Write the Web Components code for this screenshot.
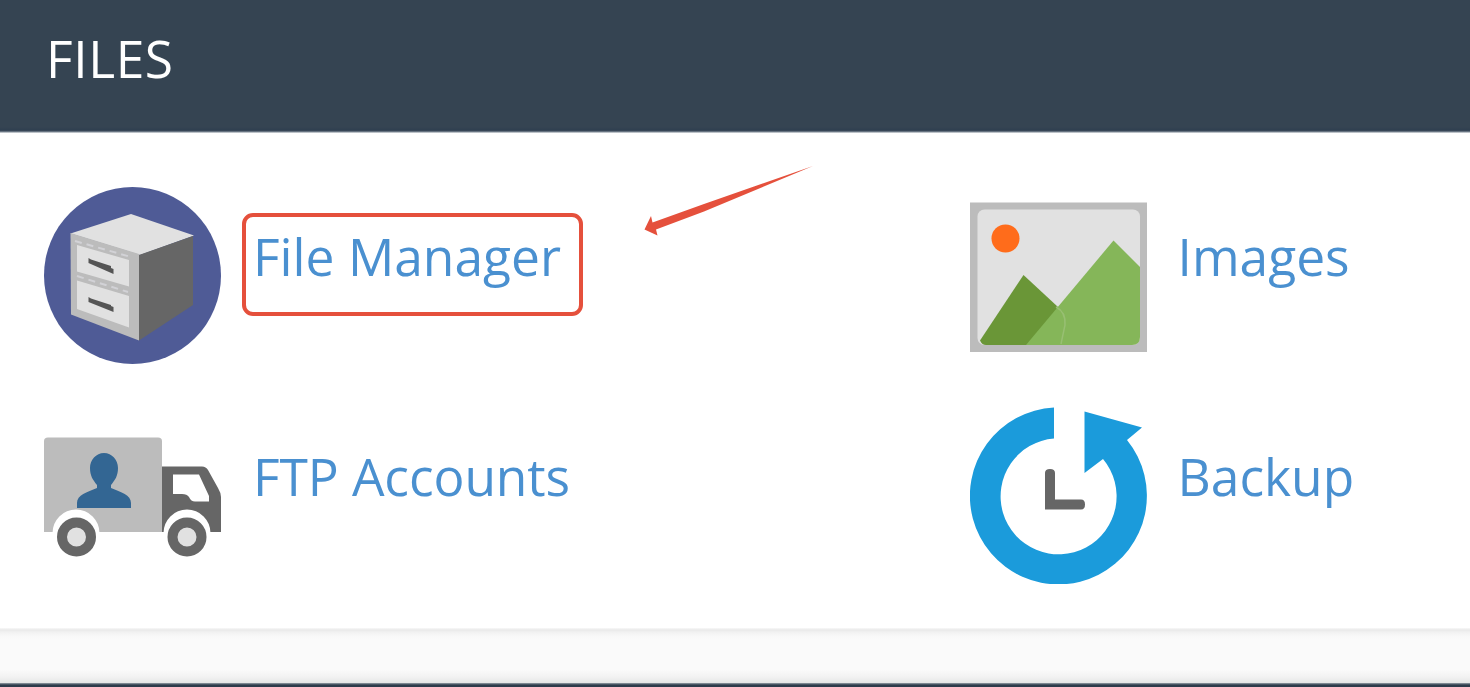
<!DOCTYPE html>
<html lang="en">
<head>
<meta charset="utf-8">
<title>Files</title>
<style>
  body {
    margin: 0;
    height: 687px;
    overflow: hidden;
    background: #fff;
    font-family: "Open Sans", "Noto Sans", sans-serif;
  }
</style>
</head>
<body>
<file-panel heading="FILES">
  <panel-item label="File Manager" icon="cabinet" marked style="--gap: 32px"></panel-item>
  <panel-item label="Images" icon="picture"></panel-item>
  <panel-item label="FTP Accounts" icon="truck" style="--gap: 32px; --tracking: -0.1px"></panel-item>
  <panel-item label="Backup" icon="backup"></panel-item>
</file-panel>

<script>
const icons = {
  cabinet: `
    <circle cx="88.500" cy="88.500" r="88.500" fill="#4f5b96"/>
    <path d="M26.500 46.500 87 27 150 48.500 96 68Z" fill="#e1e1e1"/>
    <path d="M26.500 46 95 67V153.500L27 127.500Z" fill="#bcbcbc"/>
    <path d="M33 58 85 73V99.500L33 84.500ZM33 93.500 85 109V140.500L33 122Z" fill="#e1e1e1"/>
    <path d="M31 54 87 70M33 89 84 105" stroke="#d2d2d6" stroke-width="2" stroke-dasharray="7 5"/>
    <path d="M95 68 149 49V118L95 153.500Z" fill="#666"/>
    <path d="M44.500 71V76L69.500 87V82L67 81V79L47 72.500ZM44.500 110V115L69.500 125V120L67 119V118L47 111.500Z" fill="#555"/>`,
  picture: `
    <path d="M0 15.500H177V165H0Z" fill="#bcbcbc"/>
    <rect x="7.500" y="22.500" width="162.500" height="135.500" rx="7" fill="#e1e1e1"/>
    <circle cx="35.500" cy="51.500" r="14" fill="#ff6c1b"/>
    <path d="M10 153.500 53.500 88 88 120 82 158H16Q12 158 10 153.500Z" fill="#6a9637"/>
    <path d="M56 158 143.500 53.500 170 80V150Q170 158 162 158Z" fill="#85b659"/>
    <path d="M86 120Q96 125 95 138L91 157" fill="none" stroke="#98bf73" stroke-width="1.500"/>`,
  truck: `
    <path d="M0 34Q0 30.500 4 30.500H114Q118 30.500 118 34V125H0Z" fill="#bcbcbc"/>
    <path d="M118 59.500H158Q162 59.500 164 63L174 81Q177 86 177 90V125H118Z" fill="#666"/>
    <path d="M129 67.500H155L165 89V94.500H151Q147 94.500 145 90Q143 87 138 87H129Z" fill="#fff"/>
    <path d="M60 46C68 46 74 53 74 61C74 69 71 73 67 78V81C77 85 87 88 87 96V101H33V96C33 88 43 85 53 81V78C49 73 46 69 46 61C46 53 52 46 60 46Z" fill="#336693"/>
    <path d="M8.500 126A23.500 23.500 0 0 1 55.500 126V131H8.500ZM119.500 126A23.500 23.500 0 0 1 166.500 126V131H119.500Z" fill="#fff"/>
    <g fill="#e1e1e1" stroke="#666" stroke-width="10">
      <circle cx="32.500" cy="130" r="14.500"/>
      <circle cx="143" cy="130" r="14.500"/>
    </g>`,
  backup: `
    <path d="M84 .5A88.500 88.500 0 1 0 157 33L172 20.500 114.500 4.500V66L133 52A58 58 0 1 1 84 31.500Z" fill="#1b9bdb"/>
    <path d="M75 66Q75 62 80 62Q85 62 85 66V92.500H111Q115 92.500 115 97.500Q115 102.500 111 102.500H75Z" fill="#666"/>`
};

class FilePanel extends HTMLElement {
  constructor() {
    super();
    this.shadowDOM = this.attachShadow({ mode: 'open' });
  }

  connectedCallback() {
    this.shadowDOM.innerHTML = `
      <style>
        * {
          margin: 0;
          padding: 0;
          box-sizing: border-box;
        }
        :host {
          display: flex;
          flex-direction: column;
          height: 687px;
        }
        header {
          height: 133px;
          padding: 23px 0 0 46px;
          background: linear-gradient(#354452 0 127px, #2f3f50 130px, #3f4e5e 131px, #8e98a2 132px, #e9ebed 133px);
        }
        h2 {
          font-size: 51.500px;
          font-weight: 400;
          line-height: 70px;
          letter-spacing: 0.6px;
          color: #fff;
        }
        .items {
          display: grid;
          grid-template-columns: 926px 1fr;
          grid-auto-rows: 220px;
          height: 495px;
          padding: 54px 0 0 44px;
        }
        .gap {
          height: 55px;
          background: linear-gradient(#f8f8f8, #e9e9e9 2px, #f1f1f1 4px, #f8f8f8 8px, #fafafa 12px, #fafafa 42px, #f2f2f2 49px, #e5e6e6 55px);
        }
        .next {
          flex: 1;
          background: linear-gradient(#97a0a8, #2d3b4b 2px);
        }
      </style>
      <header><h2>${this.getAttribute('heading')}</h2></header>
      <section class="items"><slot></slot></section>
      <div class="gap"></div>
      <div class="next"></div>
    `;
  }
}

class PanelItem extends HTMLElement {
  constructor() {
    super();
    this.shadowDOM = this.attachShadow({ mode: 'open' });
  }

  connectedCallback() {
    this.shadowDOM.innerHTML = `
      <style>
        * {
          margin: 0;
          padding: 0;
          box-sizing: border-box;
        }
        :host {
          display: flex;
          align-items: flex-start;
          gap: var(--gap, 30.5px);
          position: relative;
        }
        svg {
          display: block;
          flex: none;
        }
        a {
          margin-top: 34px;
          color: #4a90d0;
          font-size: 51.500px;
          line-height: 70px;
          letter-spacing: var(--tracking, 0);
          white-space: nowrap;
          text-decoration: none;
        }
        .box {
          position: absolute;
          left: 198px;
          top: 26px;
          width: 341px;
          height: 103px;
          border: 4px solid #e5503c;
          border-radius: 11px;
        }
        .arrow {
          position: absolute;
          left: 600px;
          top: -22px;
        }
      </style>
      <svg width="177" height="177" viewBox="0 0 177 177">${icons[this.getAttribute('icon')]}</svg>
      <a>${this.getAttribute('label')}</a>
      ${this.hasAttribute('marked') ? `
        <div class="box"></div>
        <svg class="arrow" width="172" height="72" viewBox="0 0 172 72">
          <path d="M.5 64.500 7 51 8.500 57.500 60 39 169 1 60 46.500 12 64.500 13.500 70.500Z" fill="#e5503c"/>
        </svg>` : ''}
    `;
  }
}

customElements.define('file-panel', FilePanel);
customElements.define('panel-item', PanelItem);
</script>
</body>
</html>
